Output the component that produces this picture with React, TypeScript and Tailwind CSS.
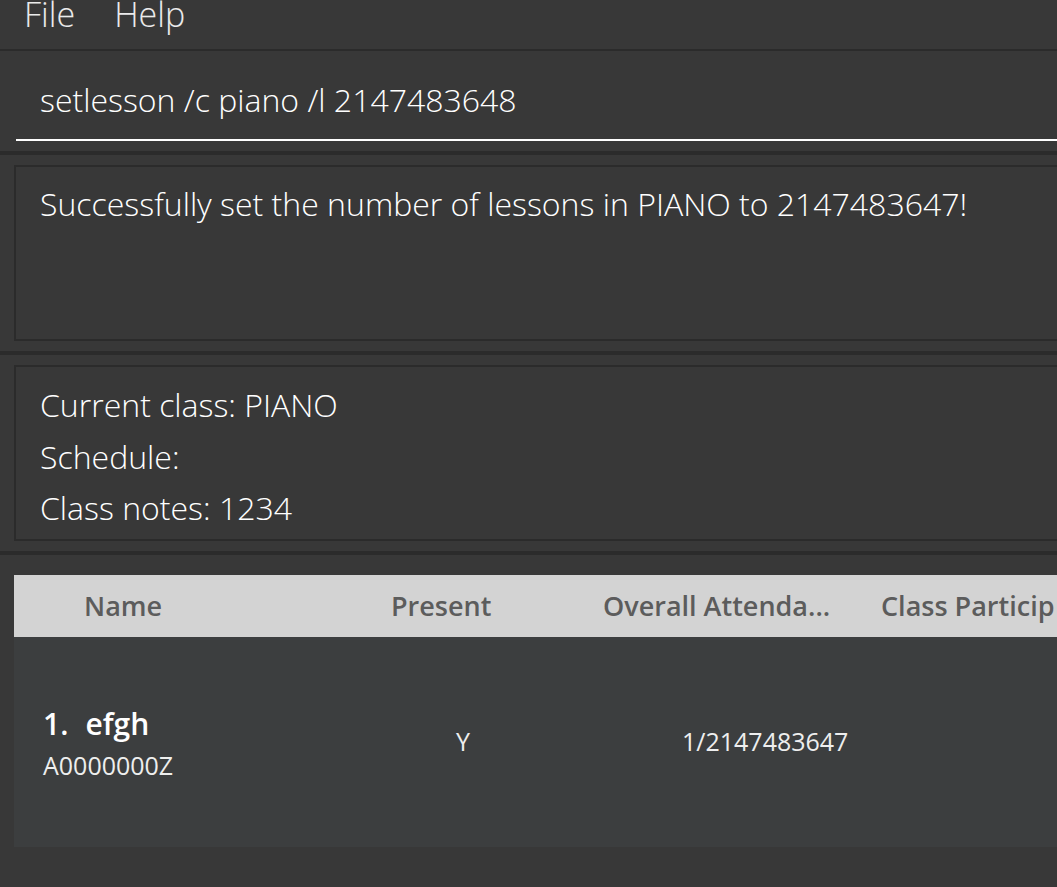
import React from "react";

const light = { fontFamily: '"Open Sans", "Noto Sans", sans-serif' };

export default function App() {
  return (
    <div className="w-[1057px] h-[887px] overflow-hidden bg-[#383838] flex flex-col" style={light}>
      {/* Menu bar */}
      <div className="h-[49px] shrink-0 flex items-start pl-[24px] gap-[39px] text-[34px] leading-[28px] font-light text-white/90">
        <span>File</span>
        <span>Help</span>
      </div>
      <div className="h-[2px] shrink-0 bg-[#2b2b2b]" />

      {/* Command box */}
      <div className="h-[100px] shrink-0 pl-[16px]">
        <div className="border-b-2 border-white pt-[33px] pb-[23px] pl-[24px] text-[32px] leading-[32px] font-light text-white whitespace-nowrap">
          setlesson /c piano /l 2147483648
        </div>
      </div>
      <div className="h-[4px] shrink-0 bg-[#2b2b2b]" />

      {/* Result display */}
      <div className="h-[196px] shrink-0 pt-[10px] pb-[10px] pl-[14px]">
        <div className="h-full border-l-2 border-t-2 border-b-2 border-[#2b2b2b] pl-[24px] pt-[21px] text-[32px] leading-[32px] font-light text-white whitespace-nowrap">
          Successfully set the number of lessons in PIANO to 2147483647!
        </div>
      </div>
      <div className="h-[4px] shrink-0 bg-[#2b2b2b]" />

      {/* Class info */}
      <div className="h-[196px] shrink-0 pt-[10px] pb-[10px] pl-[14px]">
        <div className="h-full border-l-2 border-t-2 border-b-2 border-[#2b2b2b] pl-[24px] pt-[12px] text-[32px] leading-[51.5px] font-light text-white whitespace-nowrap">
          <div>Current class: PIANO</div>
          <div>Schedule:</div>
          <div>Class notes: 1234</div>
        </div>
      </div>
      <div className="h-[4px] shrink-0 bg-[#2b2b2b]" />

      {/* Table */}
      <div className="flex-1 pt-[20px] pl-[14px]">
        <div className="h-[62px] bg-[#d3d3d3] flex pl-[70px] text-[27px] leading-[62px] font-semibold text-[#5c5c5c] whitespace-nowrap">
          <div className="w-[307px] shrink-0">Name</div>
          <div className="w-[212px] shrink-0">Present</div>
          <div className="w-[278px] shrink-0">Overall Attenda...</div>
          <div className="shrink-0">Class Particip</div>
        </div>
        <div className="h-[210px] bg-[#3c3e3f] flex items-start pl-[29px] whitespace-nowrap text-[#eeeeee]">
          <div className="w-[413px] shrink-0 pt-[72px]">
            <div className="text-[30px] leading-[30px] font-semibold text-white">
              <span>1.</span>
              <span className="ml-[17px]">efgh</span>
            </div>
            <div className="mt-[14px] text-[25px] leading-[25px]">A0000000Z</div>
          </div>
          <div className="w-[226px] shrink-0 pt-[92px] text-[25px] leading-[25px]">Y</div>
          <div className="shrink-0 pt-[92px] text-[25px] leading-[25px]">1/2147483647</div>
        </div>
      </div>
    </div>
  );
}
